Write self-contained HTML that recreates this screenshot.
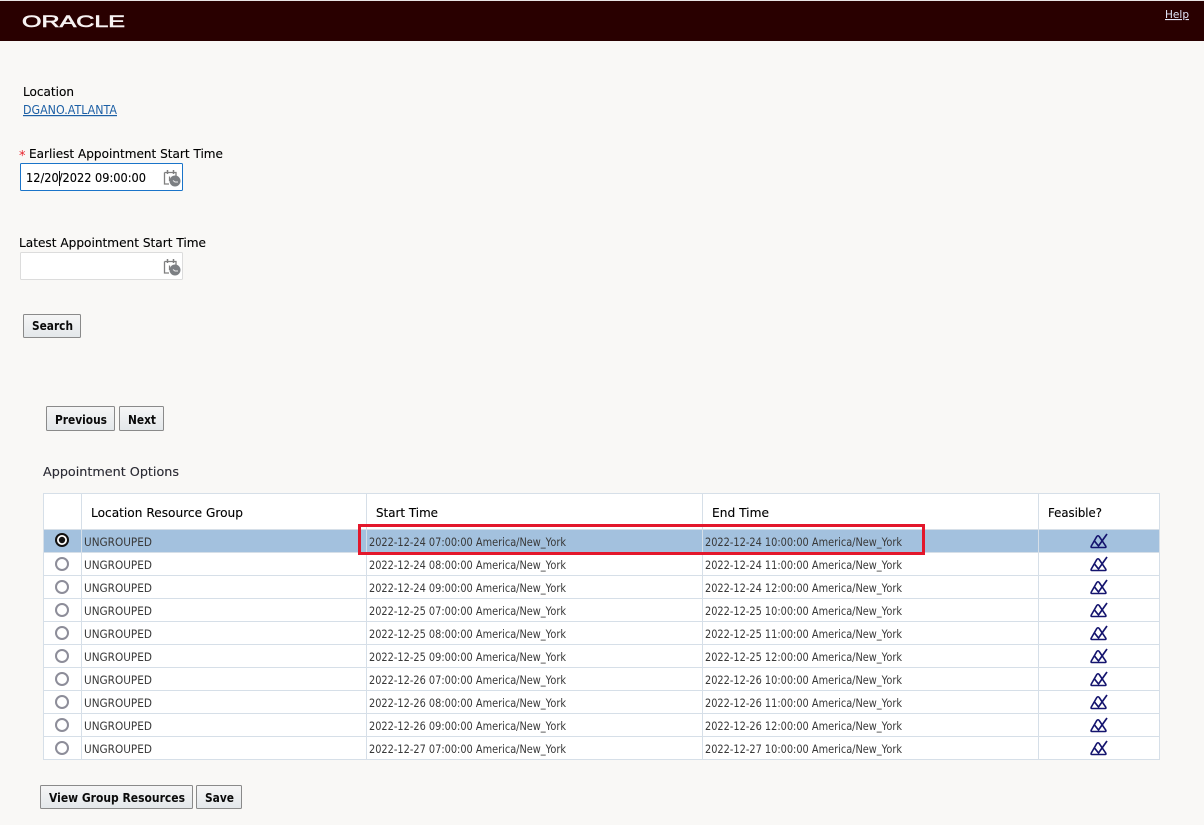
<!DOCTYPE html>
<html lang="en"><head><meta charset="utf-8"><title>Appointment Options</title>
<style>
html,body{margin:0;padding:0;background:#f9f8f6;width:1204px;height:825px;overflow:hidden}
svg{display:block}
text{font-family:"DejaVu Sans","Liberation Sans",sans-serif;white-space:pre}
.l{font-size:12.5px;fill:#000;stroke:#000;stroke-width:.12px}
.b{font-size:12.5px;font-weight:bold;fill:#0a0a0a}
.r{font-size:11.5px;fill:#383838}
.h{font-size:12.5px;fill:#000;stroke:#000;stroke-width:.12px}
.btn{fill:url(#bg);stroke:#8a8a8a;stroke-width:1}
</style></head><body>
<svg width="1204" height="825" viewBox="0 0 1204 825" xmlns="http://www.w3.org/2000/svg">
<defs>
<linearGradient id="bg" x1="0" y1="0" x2="0" y2="1"><stop offset="0" stop-color="#f6f6f6"/><stop offset="1" stop-color="#e3e7ea"/></linearGradient>
<g id="fe" fill="none" stroke="#14146e">
<path d="M1092 547.500H1105Q1106.500 547.500 1105.700 546L1099.200 536.500Q1098 535 1096.800 536.500L1091.300 546Q1090.500 547.500 1092 547.500Z" stroke-width="1.600"/>
<path d="M1094.500 541L1098.500 546L1107 534" stroke-width="1.700"/>
</g>
<g id="cal">
<path d="M164.500 172.500h11.500v4M164.500 172.500v11.500h4.500" fill="none" stroke="#7f7f7f" stroke-width="1.300"/>
<path d="M167.500 170v4M173.500 170v4" stroke="#7f7f7f" stroke-width="1.500"/>
<path d="M169.500 176.500v4.500" stroke="#7f7f7f" stroke-width="1.200"/>
<circle cx="175" cy="181" r="5.500" fill="#7c7f83"/>
<path d="M173 180.500l2 1.500h3" fill="none" stroke="#eee" stroke-width="1"/>
</g>
<circle id="rd" cx="62" cy="0" r="6" fill="#fff" stroke="#8d8d99" stroke-width="2"/>
</defs>

<rect x="0" y="0" width="1204" height="41" fill="#290000"/>
<rect x="0" y="0" width="1204" height="1" fill="#e8e4e4"/>
<text x="22" y="27" textLength="103" lengthAdjust="spacingAndGlyphs" style="font-family:'Liberation Sans',sans-serif;font-size:16.500px;fill:#f7f2f2;stroke:#f7f2f2;stroke-width:.6px">ORACLE</text>
<text x="1165" y="18" textLength="24" lengthAdjust="spacingAndGlyphs" text-decoration="underline" style="font-size:11px;fill:#e2e6f8">Help</text>

<text class="l" x="23" y="96" textLength="51" lengthAdjust="spacingAndGlyphs">Location</text>
<text class="l" x="23" y="114" textLength="94" lengthAdjust="spacingAndGlyphs" text-decoration="underline" style="fill:#1c5fa5;stroke:none;font-size:12px">DGANO.ATLANTA</text>

<text x="19" y="160" style="font-size:13px;fill:#e8202a">*</text>
<text class="l" x="29" y="158" textLength="194" lengthAdjust="spacingAndGlyphs">Earliest Appointment Start Time</text>
<rect x="20.500" y="163.500" width="162" height="27" rx="1" fill="#fff" stroke="#1a74c9" stroke-width="1"/>
<text class="l" x="26" y="182" textLength="120" lengthAdjust="spacingAndGlyphs">12/20/2022 09:00:00</text>
<rect x="59" y="171" width="1" height="15" fill="#111"/>
<use href="#cal"/>

<text class="l" x="19" y="247" textLength="187" lengthAdjust="spacingAndGlyphs">Latest Appointment Start Time</text>
<rect x="20.500" y="252.500" width="162" height="27" rx="1" fill="#fff" stroke="#dcdcdc" stroke-width="1"/>
<use href="#cal" y="89"/>

<rect class="btn" x="23.500" y="314.500" width="57" height="23" rx="1"/>
<text class="b" x="32" y="330" textLength="41" lengthAdjust="spacingAndGlyphs">Search</text>
<rect class="btn" x="46.500" y="406.500" width="68" height="24" rx="1"/>
<text class="b" x="55" y="424" textLength="52" lengthAdjust="spacingAndGlyphs">Previous</text>
<rect class="btn" x="119.500" y="406.500" width="44" height="24" rx="1"/>
<text class="b" x="128" y="424" textLength="28" lengthAdjust="spacingAndGlyphs">Next</text>

<text class="l" x="43" y="476" textLength="136" lengthAdjust="spacingAndGlyphs" style="fill:#2a2a33;stroke:#2a2a33">Appointment Options</text>

<!-- table -->
<rect x="43" y="493" width="1117" height="267" fill="#fff"/>
<rect x="43" y="530" width="1117" height="23" fill="#a3c1de"/>
<g stroke="#d6dfe8" stroke-width="1" fill="none">
<path d="M43.500 493.500H1159.500V759.500H43.500Z"/>
<path d="M81.500 493V760M366.500 493V760M702.500 493V760M1038.500 493V760"/>
<path d="M43 529.500H1160M43 552.500H1160M43 575.500H1160M43 598.500H1160M43 621.500H1160M43 644.500H1160M43 667.500H1160M43 690.500H1160M43 713.500H1160M43 736.500H1160"/>
</g>
<text class="h" x="91" y="517" textLength="152" lengthAdjust="spacingAndGlyphs">Location Resource Group</text>
<text class="h" x="376" y="517" textLength="62" lengthAdjust="spacingAndGlyphs">Start Time</text>
<text class="h" x="712" y="517" textLength="57" lengthAdjust="spacingAndGlyphs">End Time</text>
<text class="h" x="1048" y="517" textLength="54" lengthAdjust="spacingAndGlyphs">Feasible?</text>

<circle cx="62" cy="540" r="6" fill="#fff" stroke="#111" stroke-width="2"/><circle cx="62" cy="540" r="3.200" fill="#111"/>
<use href="#rd" y="564"/><use href="#rd" y="587"/><use href="#rd" y="610"/><use href="#rd" y="633"/><use href="#rd" y="656"/><use href="#rd" y="679"/><use href="#rd" y="702"/><use href="#rd" y="725"/><use href="#rd" y="748"/>

<g>
<text class="r" x="84" y="546" textLength="68" lengthAdjust="spacingAndGlyphs">UNGROUPED</text>
<text class="r" x="84" y="569" textLength="68" lengthAdjust="spacingAndGlyphs">UNGROUPED</text>
<text class="r" x="84" y="592" textLength="68" lengthAdjust="spacingAndGlyphs">UNGROUPED</text>
<text class="r" x="84" y="615" textLength="68" lengthAdjust="spacingAndGlyphs">UNGROUPED</text>
<text class="r" x="84" y="638" textLength="68" lengthAdjust="spacingAndGlyphs">UNGROUPED</text>
<text class="r" x="84" y="661" textLength="68" lengthAdjust="spacingAndGlyphs">UNGROUPED</text>
<text class="r" x="84" y="684" textLength="68" lengthAdjust="spacingAndGlyphs">UNGROUPED</text>
<text class="r" x="84" y="707" textLength="68" lengthAdjust="spacingAndGlyphs">UNGROUPED</text>
<text class="r" x="84" y="730" textLength="68" lengthAdjust="spacingAndGlyphs">UNGROUPED</text>
<text class="r" x="84" y="753" textLength="68" lengthAdjust="spacingAndGlyphs">UNGROUPED</text>

<text class="r" x="369" y="546" textLength="197" lengthAdjust="spacingAndGlyphs">2022-12-24 07:00:00 America/New_York</text>
<text class="r" x="369" y="569" textLength="197" lengthAdjust="spacingAndGlyphs">2022-12-24 08:00:00 America/New_York</text>
<text class="r" x="369" y="592" textLength="197" lengthAdjust="spacingAndGlyphs">2022-12-24 09:00:00 America/New_York</text>
<text class="r" x="369" y="615" textLength="197" lengthAdjust="spacingAndGlyphs">2022-12-25 07:00:00 America/New_York</text>
<text class="r" x="369" y="638" textLength="197" lengthAdjust="spacingAndGlyphs">2022-12-25 08:00:00 America/New_York</text>
<text class="r" x="369" y="661" textLength="197" lengthAdjust="spacingAndGlyphs">2022-12-25 09:00:00 America/New_York</text>
<text class="r" x="369" y="684" textLength="197" lengthAdjust="spacingAndGlyphs">2022-12-26 07:00:00 America/New_York</text>
<text class="r" x="369" y="707" textLength="197" lengthAdjust="spacingAndGlyphs">2022-12-26 08:00:00 America/New_York</text>
<text class="r" x="369" y="730" textLength="197" lengthAdjust="spacingAndGlyphs">2022-12-26 09:00:00 America/New_York</text>
<text class="r" x="369" y="753" textLength="197" lengthAdjust="spacingAndGlyphs">2022-12-27 07:00:00 America/New_York</text>

<text class="r" x="705" y="546" textLength="197" lengthAdjust="spacingAndGlyphs">2022-12-24 10:00:00 America/New_York</text>
<text class="r" x="705" y="569" textLength="197" lengthAdjust="spacingAndGlyphs">2022-12-24 11:00:00 America/New_York</text>
<text class="r" x="705" y="592" textLength="197" lengthAdjust="spacingAndGlyphs">2022-12-24 12:00:00 America/New_York</text>
<text class="r" x="705" y="615" textLength="197" lengthAdjust="spacingAndGlyphs">2022-12-25 10:00:00 America/New_York</text>
<text class="r" x="705" y="638" textLength="197" lengthAdjust="spacingAndGlyphs">2022-12-25 11:00:00 America/New_York</text>
<text class="r" x="705" y="661" textLength="197" lengthAdjust="spacingAndGlyphs">2022-12-25 12:00:00 America/New_York</text>
<text class="r" x="705" y="684" textLength="197" lengthAdjust="spacingAndGlyphs">2022-12-26 10:00:00 America/New_York</text>
<text class="r" x="705" y="707" textLength="197" lengthAdjust="spacingAndGlyphs">2022-12-26 11:00:00 America/New_York</text>
<text class="r" x="705" y="730" textLength="197" lengthAdjust="spacingAndGlyphs">2022-12-26 12:00:00 America/New_York</text>
<text class="r" x="705" y="753" textLength="197" lengthAdjust="spacingAndGlyphs">2022-12-27 10:00:00 America/New_York</text>
</g>

<use href="#fe"/><use href="#fe" y="23"/><use href="#fe" y="46"/><use href="#fe" y="69"/><use href="#fe" y="92"/><use href="#fe" y="115"/><use href="#fe" y="138"/><use href="#fe" y="161"/><use href="#fe" y="184"/><use href="#fe" y="207"/>

<rect x="359.500" y="525.500" width="564" height="28" fill="none" stroke="#e3172b" stroke-width="3"/>

<rect class="btn" x="40.500" y="785.500" width="152" height="23" rx="1"/>
<text class="b" x="49" y="802" textLength="136" lengthAdjust="spacingAndGlyphs">View Group Resources</text>
<rect class="btn" x="196.500" y="785.500" width="45" height="23" rx="1"/>
<text class="b" x="205" y="802" textLength="29" lengthAdjust="spacingAndGlyphs">Save</text>
</svg>
</body></html>
